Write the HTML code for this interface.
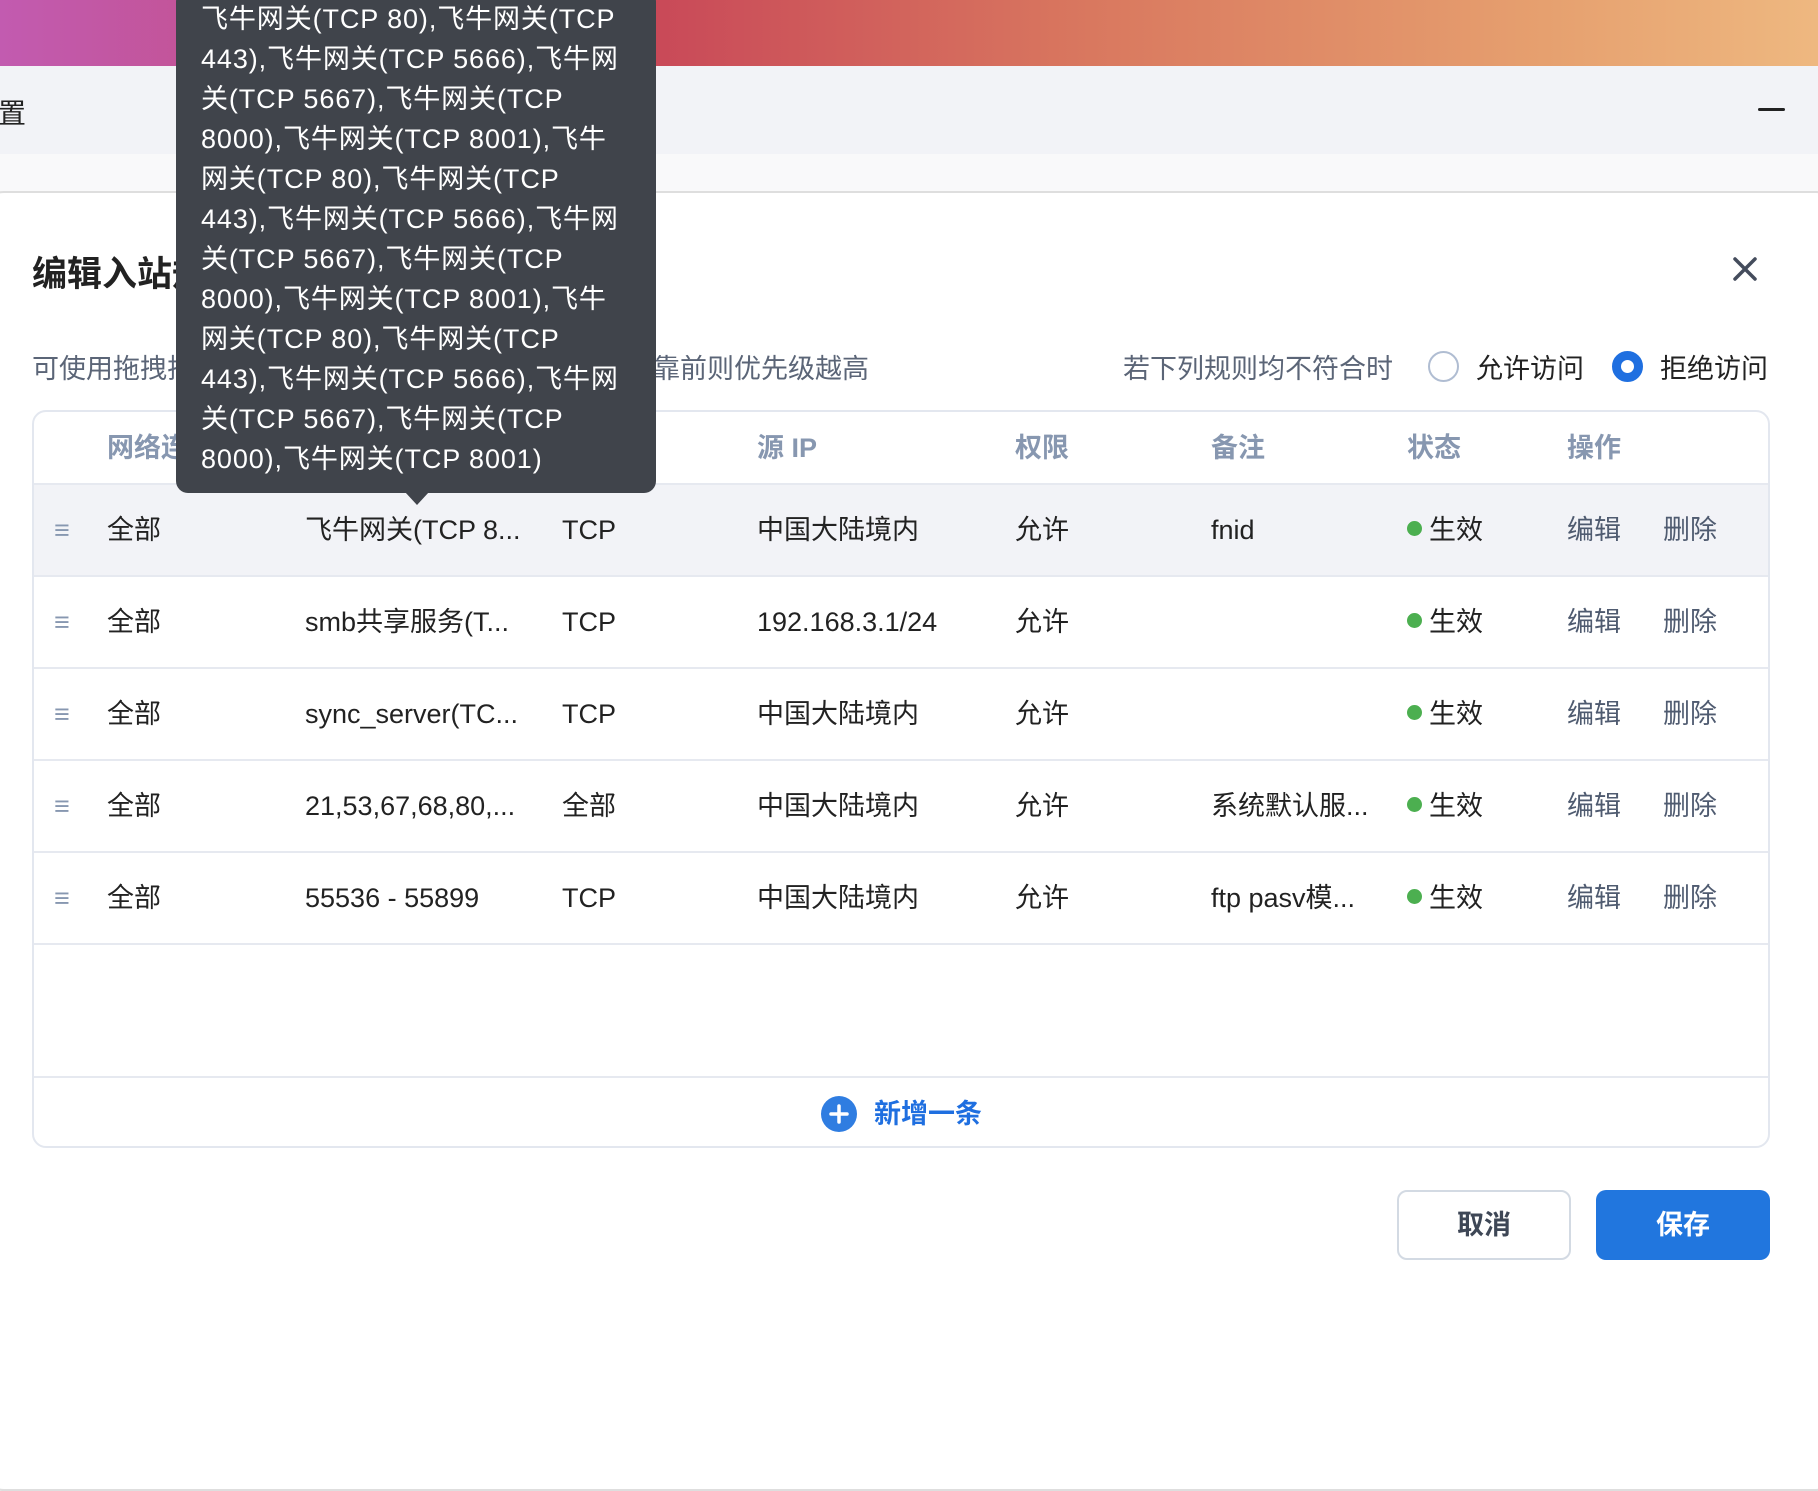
<!DOCTYPE html>
<html><head><meta charset="utf-8"><style>
*{margin:0;padding:0;box-sizing:border-box}
body{width:1818px;height:1296px;overflow:hidden;position:relative;background:#fff;font-family:"Liberation Sans","Noto Sans CJK SC",sans-serif;color:#222}
.a{position:absolute;white-space:nowrap}
.grad{left:0;top:0;width:1818px;height:66px;background:linear-gradient(90deg,#c25bb0 0%,#c44a78 25%,#c84758 35%,#d9785f 60%,#e6a06f 85%,#eeb880 100%)}
.hdr{left:0;top:66px;width:1818px;height:88px;background:#f2f3f7}
.fade{left:0;top:154px;width:1818px;height:40px;background:#f9f9fa}
.card{left:-20px;top:191px;width:1860px;height:1300px;background:#fff;border:2px solid #dedede;border-radius:24px}
.tb{left:32px;top:410px;width:1738px;height:738px;border:2px solid #e3e7ef;border-radius:14px;overflow:hidden;background:#fff}
.row{position:absolute;left:0;width:100%;height:92px;border-bottom:2px solid #e6e9f0}
.c{position:absolute;top:0;line-height:90px;font-size:27px;white-space:nowrap}
.h{font-size:27px;color:#8797b0;font-weight:bold;line-height:72px}
.dot{display:inline-block;width:15px;height:15px;border-radius:50%;background:#4caf50;margin-right:7px;vertical-align:middle;position:relative;top:-3px}
.op{color:#4f5b70}
.tip{left:176px;top:-10px;width:480px;height:503px;background:#40444b;border-radius:12px;color:#fff;font-size:27px;line-height:40px;padding:0 10px 0 25px;letter-spacing:0.9px}
</style></head><body>
<div class="a grad"></div>
<div class="a hdr"></div>
<div class="a" style="left:-30px;top:92px;font-size:28px;">设置</div>
<div class="a" style="left:1758px;top:108px;width:27px;height:3px;background:#222;border-radius:2px"></div>
<div class="a fade"></div>
<div class="a card"></div>
<div class="a" style="left:32px;top:246px;font-size:35px;font-weight:bold;color:#222">编辑入站规则</div>
<svg class="a" style="left:1732px;top:256px" width="26" height="26" viewBox="0 0 26 26"><path d="M3 3L23 23M23 3L3 23" stroke="#444c5c" stroke-width="3.5" stroke-linecap="round"/></svg>
<div class="a" style="left:32px;top:347px;font-size:27px;color:#5b6577">可使用拖拽排序来调整规则优先级，规则在列表中越靠前则优先级越高</div>
<div class="a" style="left:1123px;top:347px;font-size:27px;color:#5b6577">若下列规则均不符合时</div>
<div class="a" style="left:1428px;top:351px;width:31px;height:31px;border:2px solid #b0bdd2;border-radius:50%"></div>
<div class="a" style="left:1476px;top:347px;font-size:27px;color:#222">允许访问</div>
<div class="a" style="left:1612px;top:351px;width:31px;height:31px;border:9px solid #1f6fe0;border-radius:50%;background:#fff"></div>
<div class="a" style="left:1660px;top:347px;font-size:27px;color:#222">拒绝访问</div>

<div class="a tb">
 <div class="row" style="top:0;height:73px">
  <div class="c h" style="left:73px">网络连接</div>
  <div class="c h" style="left:271px">端口</div>
  <div class="c h" style="left:528px">协议</div>
  <div class="c h" style="left:723px">源 IP</div>
  <div class="c h" style="left:981px">权限</div>
  <div class="c h" style="left:1177px">备注</div>
  <div class="c h" style="left:1373px">状态</div>
  <div class="c h" style="left:1533px">操作</div>
 </div>
 <div class="row" style="top:73px;background:#f2f3f7">
  <div class="c" style="left:20px;color:#8797b0">≡</div><div class="c" style="left:73px">全部</div><div class="c" style="left:271px">飞牛网关(TCP 8...</div><div class="c" style="left:528px">TCP</div><div class="c" style="left:723px">中国大陆境内</div><div class="c" style="left:981px">允许</div><div class="c" style="left:1177px">fnid</div><div class="c" style="left:1373px"><span class="dot"></span>生效</div><div class="c op" style="left:1533px">编辑</div><div class="c op" style="left:1629px">删除</div>
 </div>
 <div class="row" style="top:165px">
  <div class="c" style="left:20px;color:#8797b0">≡</div><div class="c" style="left:73px">全部</div><div class="c" style="left:271px">smb共享服务(T...</div><div class="c" style="left:528px">TCP</div><div class="c" style="left:723px">192.168.3.1/24</div><div class="c" style="left:981px">允许</div><div class="c" style="left:1373px"><span class="dot"></span>生效</div><div class="c op" style="left:1533px">编辑</div><div class="c op" style="left:1629px">删除</div>
 </div>
 <div class="row" style="top:257px">
  <div class="c" style="left:20px;color:#8797b0">≡</div><div class="c" style="left:73px">全部</div><div class="c" style="left:271px">sync_server(TC...</div><div class="c" style="left:528px">TCP</div><div class="c" style="left:723px">中国大陆境内</div><div class="c" style="left:981px">允许</div><div class="c" style="left:1373px"><span class="dot"></span>生效</div><div class="c op" style="left:1533px">编辑</div><div class="c op" style="left:1629px">删除</div>
 </div>
 <div class="row" style="top:349px">
  <div class="c" style="left:20px;color:#8797b0">≡</div><div class="c" style="left:73px">全部</div><div class="c" style="left:271px">21,53,67,68,80,...</div><div class="c" style="left:528px">全部</div><div class="c" style="left:723px">中国大陆境内</div><div class="c" style="left:981px">允许</div><div class="c" style="left:1177px">系统默认服...</div><div class="c" style="left:1373px"><span class="dot"></span>生效</div><div class="c op" style="left:1533px">编辑</div><div class="c op" style="left:1629px">删除</div>
 </div>
 <div class="row" style="top:441px">
  <div class="c" style="left:20px;color:#8797b0">≡</div><div class="c" style="left:73px">全部</div><div class="c" style="left:271px">55536 - 55899</div><div class="c" style="left:528px">TCP</div><div class="c" style="left:723px">中国大陆境内</div><div class="c" style="left:981px">允许</div><div class="c" style="left:1177px">ftp pasv模...</div><div class="c" style="left:1373px"><span class="dot"></span>生效</div><div class="c op" style="left:1533px">编辑</div><div class="c op" style="left:1629px">删除</div>
 </div>
 <div class="row" style="top:664px;height:2px;border:none;background:#e6e9f0"></div>
 <div class="a" style="left:787px;top:684px;width:36px;height:36px;border-radius:50%;background:#2f7de1"></div>
 <svg class="a" style="left:787px;top:684px" width="36" height="36"><path d="M18 10V26M10 18H26" stroke="#fff" stroke-width="3.5" stroke-linecap="round"/></svg>
 <div class="a" style="left:840px;top:682px;font-size:27px;color:#1f6fe0;line-height:40px;font-weight:bold">新增一条</div>
</div>

<div class="a" style="left:1397px;top:1190px;width:174px;height:70px;border:2px solid #d3dae3;border-radius:10px;text-align:center;line-height:66px;font-size:27px;font-weight:bold;color:#3e4756">取消</div>
<div class="a" style="left:1596px;top:1190px;width:174px;height:70px;background:#2176de;border-radius:10px;text-align:center;line-height:70px;font-size:27px;font-weight:bold;color:#fff">保存</div>

<div class="a tip" style="white-space:normal">
<div style="position:relative;top:9px;white-space:nowrap">飞牛网关(TCP 80),飞牛网关(TCP<br>443),飞牛网关(TCP 5666),飞牛网<br>关(TCP 5667),飞牛网关(TCP<br>8000),飞牛网关(TCP 8001),飞牛<br>网关(TCP 80),飞牛网关(TCP<br>443),飞牛网关(TCP 5666),飞牛网<br>关(TCP 5667),飞牛网关(TCP<br>8000),飞牛网关(TCP 8001),飞牛<br>网关(TCP 80),飞牛网关(TCP<br>443),飞牛网关(TCP 5666),飞牛网<br>关(TCP 5667),飞牛网关(TCP<br>8000),飞牛网关(TCP 8001)</div>
</div>
<div class="a" style="left:405px;top:492px;width:0;height:0;border-left:12px solid transparent;border-right:12px solid transparent;border-top:13px solid #40444b"></div>
</body></html>
